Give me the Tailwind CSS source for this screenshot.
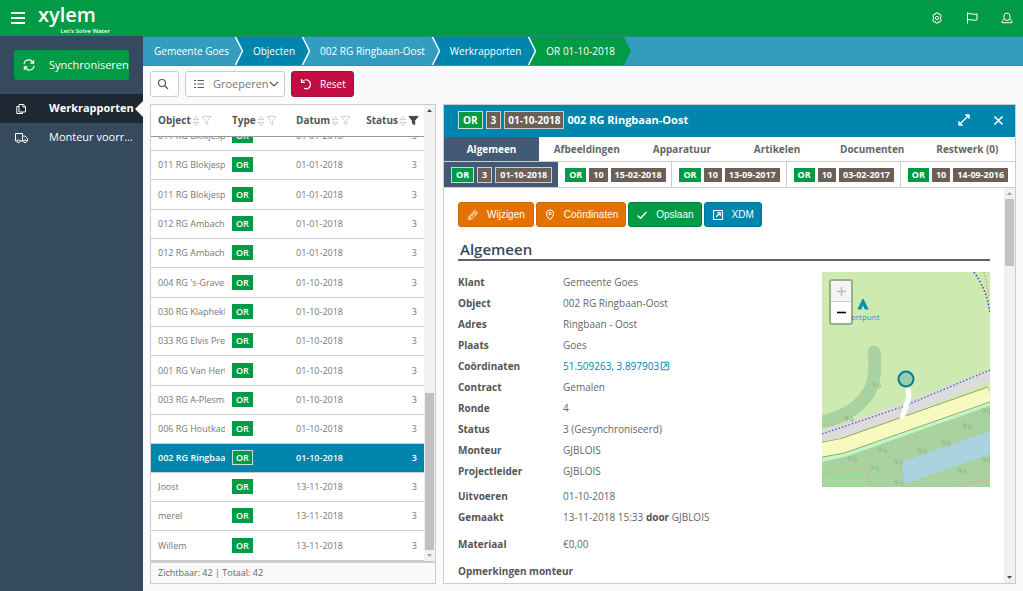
<!DOCTYPE html>
<html lang="nl">
<head>
<meta charset="utf-8">
<meta name="viewport" content="width=device-width, initial-scale=1">
<title>Xylem - Werkrapporten</title>
<script src="https://cdn.jsdelivr.net/npm/@tailwindcss/browser@4"></script>
</head>
<body class="flex h-screen flex-col overflow-hidden bg-[#fafafa] font-['Open_Sans',sans-serif] text-[11px] text-[#666]">

<!-- Icon symbols -->
<svg class="hidden" aria-hidden="true">
  <symbol id="sort" viewBox="0 0 8 12"><g fill="none" stroke="#ccc"><path d="M1.200 4.600 4 1.600l2.800 3zM1.200 7.400 4 10.400l2.800-3z"/></g></symbol>
  <symbol id="funnel" viewBox="0 0 12 12"><path d="M1 1.500h10L7.300 6v4.500L4.700 9V6z" stroke-linejoin="round"/></symbol>
  <symbol id="external" viewBox="0 0 12 12"><g fill="none" stroke="currentColor" stroke-width="1.100"><path d="M1.500 1.500h9v9h-9z"/><path d="M4 8l4-4M5 3.700h3.300V7"/></g></symbol>
</svg>

<header class="flex h-9 shrink-0 items-center bg-[#009b44] text-white">
  <button aria-label="Menu" class="ml-[11px] flex flex-col gap-[3px]">
    <span class="block h-[2px] w-[14px] bg-white"></span><span class="block h-[2px] w-[14px] bg-white"></span><span class="block h-[2px] w-[14px] bg-white"></span>
  </button>
  <a href="#" class="ml-[13px] flex w-[72px] flex-col pt-[2px]">
    <span class="font-['Open_Sans',sans-serif] text-[20px] leading-[24px] font-semibold">xylem</span>
    <span class="text-right text-[6px] leading-[8px] font-semibold">Let's Solve Water</span>
  </a>
  <nav class="mr-[10px] ml-auto flex items-center gap-[23px]">
    <button aria-label="Instellingen"><svg class="size-3" viewBox="0 0 12 12" fill="none" stroke="#fff"><path d="M4.800 1h2.400l.4 1.300 1.400-.3 1.300 2L9.500 5v2l.8 1L9 10l-1.400-.3L7.200 11H4.800l-.4-1.300L3 10 1.700 8l.8-1V5l-.8-1L3 2l1.400.3z"/><circle cx="6" cy="6" r="1.600"/></svg></button>
    <button aria-label="Vlag"><svg class="size-3" viewBox="0 0 12 12" fill="none" stroke="#fff"><path d="M1.500.5v11M1.500 2q2.500-1 5 0t4.500-.2v6q-2 1-4.500.2t-5 0"/></svg></button>
    <button aria-label="Gebruiker"><svg class="size-3" viewBox="0 0 12 12" fill="none" stroke="#fff"><path d="M6 1a3 3 0 0 1 3 3v1.500a3 3 0 0 1-6 0V4a3 3 0 0 1 3-3zM3.300 7.200C1.800 7.600 1 8.600 1 10.700h10c0-2.100-.8-3.100-2.300-3.500"/></svg></button>
  </nav>
</header>

<div class="flex min-h-0 flex-1">
  <aside class="w-[143px] shrink-0 bg-[#35495f] text-[11px] text-white">
    <div class="px-[14px] py-[14px]">
      <button class="flex h-[30px] w-full items-center rounded-[3px] bg-[#009b44] whitespace-nowrap">
        <svg class="ml-[9px] size-3 shrink-0" viewBox="0 0 12 12" fill="none" stroke="#fff" stroke-width="1.200"><path d="M1 5.200A4.600 4.600 0 0 1 9.800 3.700M11 6.800A4.600 4.600 0 0 1 2.200 8.300M10.600 1v3.200H7.400M1.400 11V7.800h3.200"/></svg>
        <span class="ml-[14px]">Synchroniseren</span>
      </button>
    </div>
    <nav>
      <a href="#" aria-current="page" class="flex h-[29px] items-center bg-[#1e2833] font-bold">
        <svg class="ml-[15px] size-3 shrink-0" viewBox="0 0 12 12" fill="none" stroke="#fff"><path d="M4 1.500h4.500l2 2V9H4zM8 1.500V4h2.500M4 3.500H1.800v7h5.700V9"/></svg>
        <span class="ml-[22px]">Werkrapporten</span>
        <svg class="ml-auto h-4 w-2 shrink-0" viewBox="0 0 8 16"><path d="M8 0v16L0 8z" fill="#fafafa"/></svg>
      </a>
      <a href="#" class="flex h-[29px] items-center">
        <svg class="ml-[15px] h-3 w-[13px] shrink-0" viewBox="0 0 13 12" fill="none" stroke="#fff"><path d="M2 9H.5V1.500h7V9H5M7.500 4H10l2.500 2.500V9H11.500M7.500 9H8.500"/><circle cx="3.500" cy="9.300" r="1.400"/><circle cx="10" cy="9.300" r="1.400"/></svg>
        <span class="ml-[21px]">Monteur voorr...</span>
      </a>
    </nav>
  </aside>

  <main class="flex min-w-0 flex-1 flex-col">
    <nav aria-label="Kruimelpad" class="h-[30px] shrink-0 border-t border-b border-t-[#22907c] border-b-[#3b8d9c] bg-[#329dbf] text-[10px] text-white">
      <ol class="flex h-7 items-center whitespace-nowrap">
        <li class="flex items-center"><a href="#" class="pr-[5px] pl-[11px]">Gemeente Goes</a><svg class="h-7 w-[10px] bg-[#0085ad]" viewBox="0 0 10 28"><path d="M0-1h1l7 15-7 15H0z" fill="#329dbf"/><path d="M1-1l7.500 15L1 29" fill="none" stroke="#fff" stroke-width="1.500"/></svg></li>
        <li class="flex items-center"><a href="#" class="flex h-7 items-center bg-[#0085ad] pr-[6px] pl-[9px]">Objecten</a><svg class="h-7 w-[10px] bg-[#329dbf]" viewBox="0 0 10 28"><path d="M0-1h1l7 15-7 15H0z" fill="#0085ad"/><path d="M1-1l7.500 15L1 29" fill="none" stroke="#fff" stroke-width="1.500"/></svg></li>
        <li class="flex items-center"><a href="#" class="pr-[6px] pl-[9px]">002 RG Ringbaan-Oost</a><svg class="h-7 w-[10px] bg-[#0085ad]" viewBox="0 0 10 28"><path d="M0-1h1l7 15-7 15H0z" fill="#329dbf"/><path d="M1-1l7.500 15L1 29" fill="none" stroke="#fff" stroke-width="1.500"/></svg></li>
        <li class="flex items-center"><a href="#" class="flex h-7 items-center bg-[#0085ad] pr-[6px] pl-[9px]">Werkrapporten</a><svg class="h-7 w-[10px] bg-[#009b44]" viewBox="0 0 10 28"><path d="M0-1h1l7 15-7 15H0z" fill="#0085ad"/><path d="M1-1l7.500 15L1 29" fill="none" stroke="#fff" stroke-width="1.500"/></svg></li>
        <li class="flex items-center"><a href="#" aria-current="page" class="flex h-7 items-center bg-[#009b44] pr-[9px] pl-[9px]">OR 01-10-2018</a><svg class="h-7 w-[7px]" viewBox="0 0 7 28"><path d="M0 0l7 14-7 14z" fill="#009b44"/></svg></li>
      </ol>
    </nav>

    <div class="flex h-[38px] shrink-0 items-start gap-[6px] px-[7px] pt-[5px]">
      <button aria-label="Zoeken" class="flex h-[26px] w-[29px] items-center rounded-[3px] border border-[#ccc] bg-white pl-[6px]"><svg class="size-3" viewBox="0 0 12 12" fill="none" stroke="#555" stroke-width="1.200"><circle cx="5" cy="5" r="3.500"/><path d="M7.500 7.500l3.500 3.500"/></svg></button>
      <button class="flex h-[26px] w-[100px] items-center rounded-[3px] border border-[#ccc] bg-white text-[#777]">
        <svg class="ml-[7px] h-3 w-3 shrink-0" viewBox="0 0 12 12" stroke="#555" stroke-width="1.100"><path d="M1 2.500h2M4.500 2.500H11M1 6h2M4.500 6H11M1 9.500h2M4.500 9.500H11"/></svg>
        <span class="ml-2">Groeperen</span>
        <svg class="h-3 w-[10px] shrink-0" viewBox="0 0 10 12" fill="none" stroke="#555" stroke-width="1.200"><path d="M1 4l4 4 4-4"/></svg>
      </button>
      <button class="flex h-[26px] w-[63px] items-center rounded-[3px] border border-[#a30f3c] bg-[#c20e43] text-[10px] text-white">
        <svg class="ml-2 size-3 shrink-0" viewBox="0 0 12 12" fill="none" stroke="#fff" stroke-width="1.200"><path d="M1.500 1v3.500H5M1.700 4.300C4 1.500 7 1.500 8.700 2.800c2.300 2 2.300 5.200.3 7-1.500 1.200-3.500 1.200-5 .5"/></svg>
        <span class="ml-2">Reset</span>
      </button>
    </div>

    <div class="flex min-h-0 flex-1 gap-[7px] pr-[7px] pb-[7px] pl-[7px]">

      <!-- Report list -->
      <section class="flex w-[286px] shrink-0 flex-col border border-[#ccc] bg-white">
        <div class="flex min-h-0 flex-1">
          <!-- Reversed column keeps the newest reports at the bottom in view -->
          <div class="flex min-w-0 flex-1 flex-col-reverse overflow-hidden">
            <table class="w-full shrink-0 table-fixed border-separate border-spacing-0 text-left text-[9px] text-[#777]">
              <thead class="sticky top-0 z-10 bg-white text-[10px] text-[#555]">
                <tr class="h-8">
                  <th class="w-[74px] border-b border-[#999] pl-[7px]"><span class="flex items-center gap-[1px]">Object<svg class="h-3 w-2"><use href="#sort"/></svg><svg class="size-[11px]" fill="none" stroke="#ccc"><use href="#funnel"/></svg></span></th>
                  <th class="w-[64px] border-b border-[#999] pl-[7px]"><span class="flex items-center gap-[1px]">Type<svg class="h-3 w-2"><use href="#sort"/></svg><svg class="size-[11px]" fill="none" stroke="#ccc"><use href="#funnel"/></svg></span></th>
                  <th class="border-b border-[#999] pl-[7px]"><span class="flex items-center gap-[1px]">Datum<svg class="h-3 w-2"><use href="#sort"/></svg><svg class="size-[11px]" fill="none" stroke="#ccc"><use href="#funnel"/></svg></span></th>
                  <th class="w-[66px] border-b border-[#999] pr-[5px]"><span class="flex items-center justify-end gap-[1px]">Status<svg class="h-3 w-2"><use href="#sort"/></svg><svg class="size-[11px]" fill="#444" stroke="#444"><use href="#funnel"/></svg></span></th>
                </tr>
              </thead>
              <tbody id="rows"></tbody>
            </table>
          </div>
          <div class="flex w-[11px] shrink-0 flex-col items-center justify-between bg-[#f1f1f1]">
            <svg class="h-[11px] w-[11px]" viewBox="0 0 11 11"><path d="M3 7l2.500-3L8 7z" fill="#505050"/></svg>
            <div class="mt-auto h-[157px] w-[9px] bg-[#c1c1c1]"></div>
            <svg class="h-[11px] w-[11px]" viewBox="0 0 11 11"><path d="M3 4l2.500 3L8 4z" fill="#a3a3a3"/></svg>
          </div>
        </div>
        <footer class="flex h-[22px] shrink-0 items-center border-t-2 border-[#ccc] bg-[#f9f9f9] pl-[7px] text-[9px]">Zichtbaar: 42 | Totaal: 42</footer>
      </section>

      <!-- Report detail -->
      <section class="flex min-w-0 flex-1 flex-col border border-[#ccc] bg-white">
        <header class="flex h-8 shrink-0 items-center bg-[#0085ad] pb-[2px] pl-[14px] text-white">
          <h1 class="flex items-center gap-[3px] text-[10px] font-bold">
            <span class="border border-[#bfe0d0] bg-[#009b44] px-1 leading-4">OR</span>
            <span class="border border-[#ccc] bg-[#6b5f57] px-1 leading-4">3</span>
            <span class="border border-[#ccc] bg-[#6b5f57] px-[3px] leading-4">01-10-2018</span>
            <span class="text-[11px]">002 RG Ringbaan-Oost</span>
          </h1>
          <button aria-label="Vergroten" class="ml-auto"><svg class="size-3" viewBox="0 0 12 12" fill="#fff" stroke="#fff"><path d="M7.500.8h3.700v3.700zM.8 7.500v3.700h3.700z"/><path d="M2 10l8-8" stroke-width="1.300"/></svg></button>
          <button aria-label="Sluiten" class="mr-[11px] ml-[23px]"><svg class="size-[11px]" viewBox="0 0 11 11" stroke="#fff" stroke-width="1.600"><path d="M1.500 1.500l8 8M9.500 1.500l-8 8"/></svg></button>
        </header>
        <nav class="grid h-[25px] shrink-0 grid-cols-6 border-b border-[#ccc] text-center text-[10px] leading-[24px] font-bold">
          <button class="bg-[#425a75] text-white">Algemeen</button>
          <button>Afbeeldingen</button>
          <button>Apparatuur</button>
          <button>Artikelen</button>
          <button>Documenten</button>
          <button>Restwerk (0)</button>
        </nav>
        <nav class="grid h-[26px] shrink-0 grid-cols-5 border-b border-[#ccc] text-[9px] leading-[14px] font-bold text-white">
          <button class="flex items-center gap-[3px] bg-[#425a75] pl-[7px]"><span class="border border-[#bfe0d0] bg-[#009b44] px-1">OR</span><span class="border border-[#ccc] bg-[#6b5f57] px-1">3</span><span class="border border-[#ccc] bg-[#6b5f57] px-1">01-10-2018</span></button>
          <button class="flex items-center gap-[3px] border-r border-[#ccc] pl-[7px]"><span class="bg-[#009b44] px-1">OR</span><span class="bg-[#6b5f57] px-1">10</span><span class="bg-[#6b5f57] px-1">15-02-2018</span></button>
          <button class="flex items-center gap-[3px] border-r border-[#ccc] pl-[7px]"><span class="bg-[#009b44] px-1">OR</span><span class="bg-[#6b5f57] px-1">10</span><span class="bg-[#6b5f57] px-1">13-09-2017</span></button>
          <button class="flex items-center gap-[3px] border-r border-[#ccc] pl-[7px]"><span class="bg-[#009b44] px-1">OR</span><span class="bg-[#6b5f57] px-1">10</span><span class="bg-[#6b5f57] px-1">03-02-2017</span></button>
          <button class="flex items-center gap-[3px] pl-[7px]"><span class="bg-[#009b44] px-1">OR</span><span class="bg-[#6b5f57] px-1">10</span><span class="bg-[#6b5f57] px-1">14-09-2016</span></button>
        </nav>

        <div class="flex min-h-0 flex-1">
          <div class="min-w-0 flex-1 overflow-hidden pt-[14px] pr-[14px] pl-[14px]">
            <div class="flex gap-[2px] font-['Liberation_Sans',sans-serif] text-[10px] text-white">
              <button class="flex h-[25px] items-center gap-2 rounded-[3px] border border-[#c96a0a] bg-[#e57200] px-2"><svg class="size-3" viewBox="0 0 12 12" fill="none" stroke="#fff"><path d="M1.500 10.500l.8-3.200L8 1.500l2.500 2.500-5.800 5.700zM6.500 3L9 5.500M2.300 7.300l2.400 2.400M4 7.500L7 4.500"/></svg>Wijzigen</button>
              <button class="flex h-[25px] items-center gap-2 rounded-[3px] border border-[#c96a0a] bg-[#e57200] px-[7px]"><svg class="size-3" viewBox="0 0 12 12" fill="none" stroke="#fff"><path d="M6 11C4 8.500 2.500 6.500 2.500 4.500a3.500 3.500 0 0 1 7 0C9.500 6.500 8 8.500 6 11z"/><circle cx="6" cy="4.500" r="1.200"/></svg>Coördinaten</button>
              <button class="flex h-[25px] items-center gap-2 rounded-[3px] border border-[#00803a] bg-[#009b44] px-[7px]"><svg class="size-3" viewBox="0 0 12 12" fill="none" stroke="#fff" stroke-width="1.400"><path d="M1.500 6.500L4.500 9.200 10.500 3"/></svg>Opslaan</button>
              <button class="flex h-[25px] items-center gap-2 rounded-[3px] border border-[#00739a] bg-[#0085ad] px-[7px]"><svg class="size-3" viewBox="0 0 12 12"><use href="#external"/></svg>XDM</button>
            </div>
            <h2 class="mt-3 h-[22px] border-b-2 border-[#5a6474] pl-[2px] text-[15px] leading-5 font-semibold text-[#35495f]">Algemeen</h2>

            <div class="mt-[11px] flex">
              <dl class="grid flex-1 auto-rows-[21px] grid-cols-[105px_1fr] content-start text-[10px] leading-[20px] [&_dt]:font-bold [&_dt]:text-[#555]">
                <dt>Klant</dt><dd>Gemeente Goes</dd>
                <dt>Object</dt><dd>002 RG Ringbaan-Oost</dd>
                <dt>Adres</dt><dd>Ringbaan - Oost</dd>
                <dt>Plaats</dt><dd>Goes</dd>
                <dt>Coördinaten</dt><dd><a href="#" class="flex items-center gap-[1px] text-[#0085ad]">51.509263, 3.897903<svg class="size-[10px]" viewBox="0 0 12 12"><use href="#external" width="12" height="12"/></svg></a></dd>
                <dt>Contract</dt><dd>Gemalen</dd>
                <dt>Ronde</dt><dd>4</dd>
                <dt>Status</dt><dd>3 (Gesynchroniseerd)</dd>
                <dt>Monteur</dt><dd>GJBLOIS</dd>
                <dt>Projectleider</dt><dd>GJBLOIS</dd>
                <dt class="mt-1">Uitvoeren</dt><dd class="mt-1">01-10-2018</dd>
                <dt class="mt-1">Gemaakt</dt><dd class="mt-1">13-11-2018 15:33 <b class="text-[#555]">door</b> GJBLOIS</dd>
                <dt class="mt-[10px]">Materiaal</dt><dd class="mt-[10px]">€0,00</dd>
                <dt class="col-span-2 mt-4">Opmerkingen monteur</dt>
              </dl>

              <div class="relative h-[215px] w-[168px] shrink-0 overflow-hidden bg-[#cdebb0]">
                <svg class="h-full w-full" viewBox="0 0 168 215" aria-label="Kaart" font-family="Open Sans" font-size="7">
                  <path d="M0 150Q33 143 47 120 55 105 52 80" fill="none" stroke="#aad1a0" stroke-width="13" stroke-linecap="round"/>
                  <path d="M0 190L30 182 168 134V215H0z" fill="#aad1a0"/>
                  <path d="M0 185L24 180 168 128" fill="none" stroke="#b9fbc6" stroke-width="9"/>
                  <path d="M0 198Q20 193 42 195 48 202 50 215H0z" fill="#a2d99a"/>
                  <path d="M79 190L168 159V182L83 212z" fill="#aad3df"/>
                  <path d="M0 165L80 138 168 103" fill="none" stroke="#dcdcdc" stroke-width="12"/>
                  <path d="M0 162L80 135 168 98" fill="none" stroke="#5b50c4" stroke-width="1.300" stroke-dasharray="1.500 2"/>
                  <path d="M-2 178L20 174 168 122" fill="none" stroke="#968d5e" stroke-width="15.500"/>
                  <path d="M-2 178L20 174 168 122" fill="none" stroke="#f7fabf" stroke-width="14"/>
                  <path d="M86 116L87 124 80 147" fill="none" stroke="#fff" stroke-width="5"/>
                  <path d="M152 0Q166 20 168 42" fill="none" stroke="#4747c8" stroke-width="1.600" stroke-dasharray="1.500 2"/>
                  <path d="M162 0L167 24M0 203Q20 195 42 197 47 204 49 215M138 214Q152 208 168 208" fill="none" stroke="#e9a58c" stroke-width="1.600" stroke-dasharray="1.500 1.800"/>
                  <g fill="none" stroke="#8fb98a" stroke-width=".9">
                    <path id="tree" d="M26 146a1.500 1.500 0 1 0-3 0 1.500 1.500 0 0 0 3 0q0 3-2 4M30.500 144q-2 1-2 4a1.500 1.500 0 1 0 1.500-1.500"/>
                    <use href="#tree" x="27" y="-34"/><use href="#tree" x="118" y="7"/><use href="#tree" x="33" y="31"/><use href="#tree" x="73" y="32"/><use href="#tree" x="97" y="24"/><use href="#tree" x="49" y="43"/><use href="#tree" x="3" y="40"/><use href="#tree" x="25" y="49"/><use href="#tree" x="113" y="52"/><use href="#tree" x="137" y="-8"/><use href="#tree" x="50" y="64"/><use href="#tree" x="137" y="41"/>
                  </g>
                  <path d="M41 27l-5 10h3l2-5 2 5h3z" fill="#0b8fae" stroke="#0b8fae" stroke-linejoin="round"/>
                  <text x="29" y="48" font-size="8" fill="#4183d7">ortpunt</text>
                  <circle cx="84" cy="107" r="7.500" fill="#93cfae" stroke="#0f75a0" stroke-width="2"/>
                </svg>
                <div class="absolute top-[7px] left-[7px] flex w-6 flex-col rounded-[3px] border-2 border-black/25 bg-white bg-clip-padding text-black">
                  <button aria-label="Inzoomen" class="flex h-[21px] items-center justify-center border-b border-[#ccc] bg-[#f4f4f4]"><svg class="size-[9px]" viewBox="0 0 9 9" stroke="#bbb" stroke-width="1.500"><path d="M0 4.500h9M4.500 0v9"/></svg></button>
                  <button aria-label="Uitzoomen" class="flex h-[21px] items-center justify-center"><svg class="size-[9px]" viewBox="0 0 9 9" stroke="#000" stroke-width="1.600"><path d="M0 4.500h9"/></svg></button>
                </div>
              </div>
            </div>
          </div>
          <div class="flex w-[11px] shrink-0 flex-col items-center bg-[#f1f1f1]">
            <svg class="h-[11px] w-[11px]" viewBox="0 0 11 11"><path d="M3 7l2.500-3L8 7z" fill="#a3a3a3"/></svg>
            <div class="h-[67px] w-[9px] bg-[#c1c1c1]"></div>
            <svg class="mt-auto h-[11px] w-[11px]" viewBox="0 0 11 11"><path d="M3 4l2.500 3L8 4z" fill="#505050"/></svg>
          </div>
        </div>
      </section>
    </div>
  </main>
</div>

<script>
  const reports = [
    ["011 RG Blokjespad", "01-01-2018"], ["011 RG Blokjespad", "01-01-2018"], ["011 RG Blokjespad", "01-01-2018"],
    ["012 RG Ambachten", "01-01-2018"], ["012 RG Ambachten", "01-01-2018"],
    ["004 RG 's-Gravenpolder", "01-10-2018"], ["030 RG Klaphekke", "01-10-2018"], ["033 RG Elvis Presley", "01-10-2018"],
    ["001 RG Van Hertum", "01-10-2018"], ["003 RG A-Plesman", "01-10-2018"], ["006 RG Houtkade", "01-10-2018"],
    ["002 RG Ringbaan-Oost", "01-10-2018", true],
    ["Joost", "13-11-2018"], ["merel", "13-11-2018"], ["Willem", "13-11-2018"],
  ];
  document.getElementById("rows").innerHTML = reports.map(([name, date, selected]) => `
    <tr class="${selected ? "h-[29px] bg-[#0085ad] font-semibold text-white" : "h-[29px] nth-[3n]:h-[30px]"}">
      <td class="border-b border-[#ccc] pl-[7px]"><div class="overflow-hidden whitespace-nowrap">${name}</div></td>
      <td class="border-b border-[#ccc] pl-[7px]"><span class="${selected ? "border border-[#bfe0d0] bg-[#009b44] px-[3px] font-semibold text-white" : "bg-[#009b44] px-1 py-[1px] font-semibold text-white"}">OR</span></td>
      <td class="border-b border-[#ccc] pl-[7px]">${date}</td>
      <td class="border-b border-[#ccc] pr-[7px] text-right">3</td>
    </tr>`).join("");
</script>
</body>
</html>
